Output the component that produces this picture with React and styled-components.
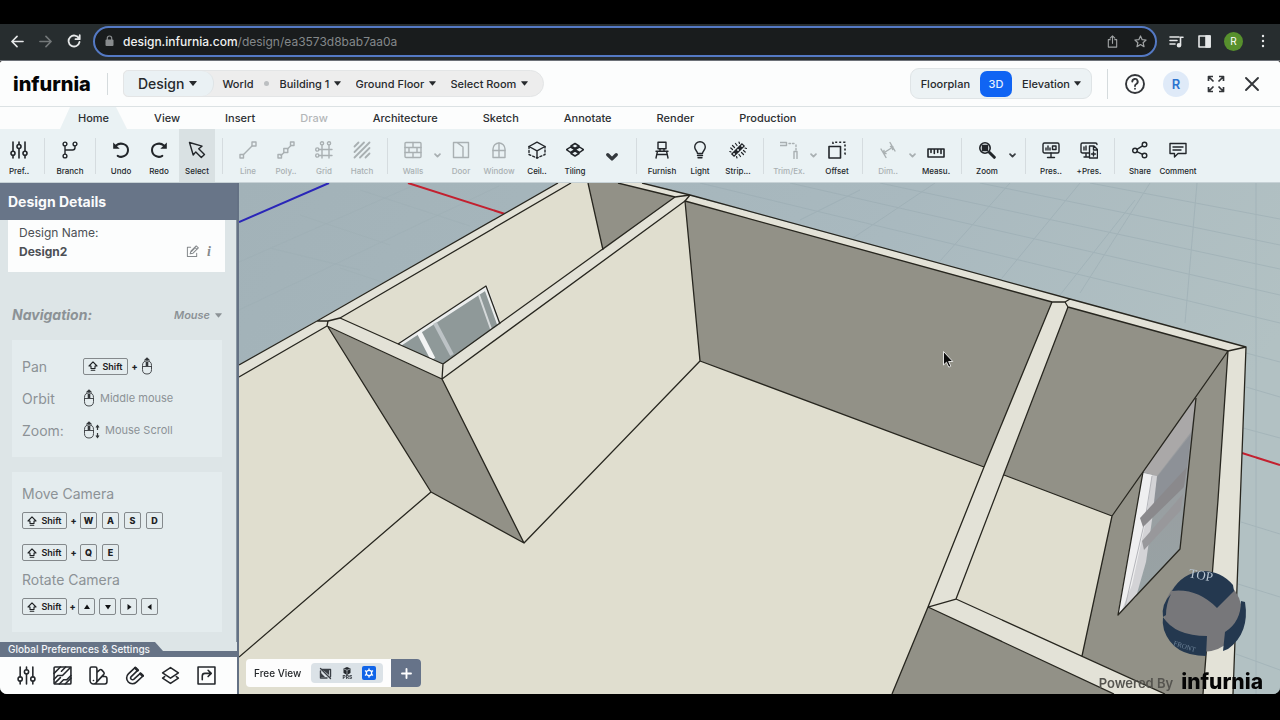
import React from 'react';
import styled, { createGlobalStyle, css } from 'styled-components';

const GlobalStyle = createGlobalStyle`
	* {
		box-sizing: border-box;
	}
	body {
		margin: 0;
		background: #000;
		font-family: Inter, 'Liberation Sans', sans-serif;
		color: #26292c;
	}
	button, select, input {
		font: inherit;
		color: inherit;
		background: none;
		border: 0;
		margin: 0;
		padding: 0;
	}
	button, select {
		cursor: pointer;
	}
	svg {
		display: block;
		flex: none;
	}
`;

const Screen = styled.div`
	display: flex;
	flex-direction: column;
	height: 100vh;
	padding: 24px 0 26px;
	background: #000;
`;

/* ---------- browser bar ---------- */

const BrowserBar = styled.div`
	display: flex;
	align-items: center;
	flex: none;
	height: 37px;
	padding: 0 9px 2px 9px;
	gap: 11px;
	background: #272d2f;
	border-bottom: 1px solid #6d7178;
	color: #e6e8e9;
`;

const BrowserButton = styled.button`
	display: flex;
	align-items: center;
	justify-content: center;
	width: 17px;
	height: 20px;
	opacity: ${(p) => (p.$dim ? 0.4 : 1)};
`;

const AddressBar = styled.form`
	display: flex;
	align-items: center;
	flex: 1;
	height: 31px;
	padding: 0 6px 0 10px;
	gap: 9px;
	border: 2px solid #5479c4;
	border-radius: 16px;
	background: #191c1d;
	color: #a0a3a4;
`;

const Url = styled.div`
	flex: 1;
	font-size: 12px;
	color: #84888a;

	b {
		font-weight: 500;
		color: #f0f1f1;
	}
`;

const BrowserTools = styled.div`
	display: flex;
	align-items: center;
	gap: 11px;
`;

const Profile = styled.button`
	width: 19px;
	height: 19px;
	border-radius: 50%;
	background: #57902d;
	color: #fff;
	font-size: 10px;
	line-height: 19px;
`;

/* ---------- app header ---------- */

const Header = styled.header`
	display: flex;
	align-items: center;
	flex: none;
	height: 46px;
	padding: 0 19px 0 13px;
	background: #fcfdfd;
	border-bottom: 1px solid #dce2e4;
	border-radius: 2px 2px 0 0;
`;

const Logo = styled.a`
	color: #050505;
	font-size: ${(p) => p.$size}px;
	line-height: 24px;
	font-weight: 800;
	text-decoration: none;
`;

const Divider = styled.span`
	flex: none;
	width: 1px;
	height: ${(p) => p.$h}px;
	margin: ${(p) => p.$m};
	background: #d5dbdd;
`;

const Crumbs = styled.nav`
	display: flex;
	align-items: center;
	height: 27px;
	padding-right: 15px;
	border: 1px solid #e3e5e6;
	border-radius: 5px 14px 14px 5px;
	background: #ededed;
	font-size: 11px;
	font-weight: 500;
`;

const DesignButton = styled.button`
	display: flex;
	align-items: center;
	gap: 5px;
	height: 25px;
	padding: 0 16px 0 14px;
	margin-right: 8px;
	border-right: 1px solid #dfe4e6;
	border-radius: 5px 12px 12px 5px;
	background: #eaf1f4;
	font-size: 14px;
	font-weight: 500;
`;

const Dot = styled.span`
	width: 5px;
	height: 5px;
	margin: 0 11px 0 10px;
	border-radius: 50%;
	background: #bcbfc1;
`;

const Picker = styled.label`
	display: flex;
	align-items: center;
	gap: 4px;

	& + & {
		margin-left: 15px;
	}

	select {
		appearance: none;
		outline: none;
	}
`;

const Spacer = styled.div`
	flex: 1;
`;

const ViewSwitch = styled.div`
	display: flex;
	align-items: center;
	gap: 10px;
	height: 31px;
	padding: 0 10px;
	border: 1px solid #dfe4e6;
	border-radius: 9px;
	background: #ecf2f4;
	font-size: 11px;
	font-weight: 500;
`;

const ViewMode = styled.button`
	height: 26px;
	${(p) =>
		p.$active &&
		css`
			width: 32px;
			border-radius: 7px;
			background: #1064f3;
			color: #e8f0ff;
		`}
`;

const HeaderIcons = styled.div`
	display: flex;
	align-items: center;
	gap: 18px;
`;

const HeaderButton = styled.button`
	display: flex;
	color: #33363a;
`;

const Avatar = styled.button`
	width: 26px;
	height: 26px;
	border-radius: 50%;
	background: #dfeaf8;
	color: #2d74cf;
	font-size: 13px;
	font-weight: 600;
`;

/* ---------- ribbon ---------- */

const Tabs = styled.nav`
	display: flex;
	flex: none;
	height: 22px;
	padding-left: 60px;
	background: #fcfdfd;
`;

const Tab = styled.button`
	padding: 0 18px;
	margin-right: 9px;
	font-size: 11px;
	font-weight: 500;
	color: ${(p) => (p.disabled ? '#b4b7b9' : '#2c2f32')};
	${(p) =>
		p.$active &&
		css`
			background: #eaf2f4;
			clip-path: polygon(10px 0, 56px 0, 100% 100%, 0 100%);
		`}
`;

const Ribbon = styled.div`
	display: flex;
	flex: none;
	height: 54px;
	padding-left: 1px;
	background: #eaf2f4;
	border-bottom: 1px solid #c7d2d6;
`;

const ToolGroup = styled.div`
	display: flex;
	gap: 2px;

	& + &::before {
		content: '';
		align-self: center;
		width: 1px;
		height: 36px;
		margin: 0 5px 0 7px;
		background: #d5dcdf;
	}
`;

const Tool = styled.button`
	display: flex;
	flex-direction: column;
	align-items: center;
	justify-content: center;
	gap: 7px;
	width: 36px;
	padding-top: 5px;
	white-space: nowrap;
	font-size: 8px;
	line-height: 10px;
	font-weight: 500;
	color: ${(p) => (p.disabled ? '#a9b0b2' : '#22262a')};
	background: ${(p) => (p.$active ? '#d9e1e3' : 'none')};

	span {
		display: flex;
		justify-content: center;
		width: 36px;
	}
`;

const Caret = styled.button`
	display: flex;
	align-items: center;
	justify-content: center;
	width: 8px;
	color: ${(p) => (p.disabled ? '#a9b0b2' : '#3a3f43')};

	&:last-child {
		width: 11px;
	}
`;

const MoreButton = styled.button`
	display: flex;
	align-items: center;
	justify-content: center;
	width: 34px;
	padding-top: 2px;
	color: #34393d;
`;

/* ---------- side panel ---------- */

const Main = styled.main`
	display: flex;
	flex: 1;
	min-height: 0;
	overflow: hidden;
	border-radius: 0 0 7px 7px;
`;

const Panel = styled.aside`
	display: flex;
	flex-direction: column;
	flex: none;
	width: 239px;
	background: #dde5e7;
	border-right: 2px solid #647184;
`;

const PanelTitle = styled.h1`
	margin: 0;
	padding: 0 8px;
	font-size: 14px;
	line-height: 37px;
	font-weight: 700;
	color: #fafbfc;
	background: #687588;
`;

const PanelBody = styled.div`
	flex: 1;
	min-height: 0;
	overflow: hidden;
	padding: 0 11px 0 8px;
	border-right: 1px solid #8a97a3;
	color: #8c9296;
`;

const NameCard = styled.section`
	display: grid;
	grid-template-columns: 1fr auto;
	padding: 3px 14px 11px 11px;
	background: #fcfdfd;
	font-size: 12px;
	line-height: 19px;
	color: #4c5055;
`;

const NameActions = styled.div`
	display: flex;
	align-items: center;
	gap: 8px;
	color: #85898c;
`;

const InfoButton = styled.button`
	font-family: 'Liberation Serif', serif;
	font-size: 14px;
	font-weight: 700;
	font-style: italic;
	line-height: 16px;
`;

const NavHead = styled.div`
	display: flex;
	align-items: center;
	justify-content: space-between;
	padding: 34px 3px 16px 4px;
	line-height: 18px;
	font-size: 11px;
	font-weight: 600;
	font-style: italic;

	h2 {
		margin: 0;
		font-size: 14px;
		font-weight: 700;
	}
`;

const HintCard = styled.section`
	margin: 0 3px 15px 4px;
	padding: ${(p) => p.$pad};
	background: #e4ecee;
`;

const HintRow = styled.div`
	display: grid;
	grid-template-columns: 61px 1fr;
	align-items: center;
	height: 32px;
	font-size: 14px;
`;

const HintTitle = styled.h3`
	margin: 0;
	font-size: 14px;
	font-weight: 400;
	line-height: 27px;
`;

const Keys = styled.div`
	display: flex;
	align-items: center;
	gap: ${(p) => p.$gap || 5}px;
	min-height: 27px;
	margin-bottom: ${(p) => p.$mb || 0}px;
	font-size: 11px;
`;

const Key = styled.kbd`
	display: flex;
	align-items: center;
	justify-content: center;
	gap: 4px;
	width: ${(p) => (p.$wide ? 45 : 17)}px;
	height: 17px;
	border: 1px solid #84898c;
	border-radius: 2px;
	font-family: inherit;
	font-size: 9px;
	font-weight: ${(p) => (p.$wide ? 600 : 800)};
	color: #1d2023;
`;

const Plus = styled.span`
	width: 7px;
	margin: 0 -2px;
	text-align: center;
	font-size: 9px;
	font-weight: 800;
	color: #1d2023;
`;

const PrefStrip = styled.div`
	flex: none;
	height: 15px;
	background: linear-gradient(transparent 9px, #667386 9px);

	h2 {
		display: inline-block;
		margin: 0;
		padding: 0 13px 0 8px;
		font-size: 10px;
		font-weight: 500;
		line-height: 15px;
		color: #f4f6f8;
		background: #667386;
		clip-path: polygon(0 0, calc(100% - 8px) 0, 100% 9px, 100% 100%, 0 100%);
		vertical-align: top;
	}
`;

const PrefBar = styled.div`
	display: flex;
	align-items: center;
	flex: none;
	gap: 17px;
	height: 37px;
	padding-left: 17px;
	background: #fcfdfd;
`;

const PrefButton = styled.button`
	display: flex;
	color: #25282c;
`;

/* ---------- 3D view ---------- */

const Viewport = styled.section`
	position: relative;
	flex: 1;
	min-width: 0;
	background: #a9b9be;

	& > svg {
		width: 100%;
		height: 100%;
	}
`;

const ViewBar = styled.div`
	position: absolute;
	left: 7px;
	bottom: 7px;
	display: flex;
	align-items: center;
	height: 28px;
	padding-left: 8px;
	border-radius: 4px;
	overflow: hidden;
	background: #fdfdfd;
	font-size: 10px;
	font-weight: 500;
`;

const ViewIcons = styled.div`
	display: flex;
	align-items: center;
	gap: 8px;
	height: 20px;
	margin: 0 8px 0 10px;
	padding: 0 7px;
	border-radius: 4px;
	background: #dbe2e7;
`;

const ViewIcon = styled.button`
	display: flex;
	flex-direction: column;
	align-items: center;
	justify-content: center;
	width: 14px;
	height: 14px;
	border-radius: 2px;
	font-size: 5px;
	line-height: 5px;
	font-weight: 800;
	color: ${(p) => (p.$active ? '#fff' : '#3a3f46')};
	background: ${(p) => (p.$active ? '#1064e8' : 'none')};
`;

const AddView = styled.button`
	display: flex;
	align-items: center;
	justify-content: center;
	width: 30px;
	height: 28px;
	background: #667389;
	color: #fff;
`;

const Powered = styled.div`
	position: absolute;
	right: 17px;
	bottom: 0;
	display: flex;
	align-items: flex-end;
	gap: 8px;
	font-size: 13px;
	font-weight: 600;
	line-height: 21px;
	color: #55544f;
`;

/* ---------- icons ---------- */

const Svg = ({ size = 18, box = 18, w = 1.4, children, ...rest }) => (
	<svg
		width={size}
		height={size}
		viewBox={`0 0 ${box} ${box}`}
		fill="none"
		stroke="currentColor"
		strokeWidth={w}
		strokeLinecap="round"
		strokeLinejoin="round"
		aria-hidden="true"
		{...rest}
	>
		{children}
	</svg>
);

const Triangle = ({ size = 7 }) => (
	<svg width={size} height="5" viewBox="0 0 8 5" aria-hidden="true">
		<path d="M0.6 0h6.8q.6 0 .3.6L4.5 4.6q-.5.6-1 0L.3.6Q0 0 .6 0z" fill="currentColor" />
	</svg>
);

const Chevron = ({ size = 7, w = 2 }) => (
	<Svg size={size} box={8} w={w}>
		<path d="M1.2 2.5 4 5.3l2.8-2.8" />
	</Svg>
);

const Sliders = (
	<>
		<path d="M3 1v9M3 14.5V17M9 1v2.500M9 7.500V17M15 1v9M15 14.500V17" />
		<circle cx="3" cy="12.300" r="2" />
		<circle cx="9" cy="5.500" r="2" />
		<circle cx="15" cy="12.300" r="2" />
	</>
);

const icons = {
	pref: Sliders,
	branch: (
		<>
			<circle cx="4" cy="3" r="1.900" />
			<circle cx="14" cy="3" r="1.900" />
			<circle cx="4" cy="15" r="1.900" />
			<path d="M4 5v8M14 5v1.500q0 2.500-2.500 2.500H4" />
		</>
	),
	undo: (
		<>
			<path d="M4 4.500c4.500-3.800 12-1.300 12 4.500 0 5.500-6 8.500-10.300 5.800" strokeWidth="2" />
			<path d="M1.200 1.500v6.200h6.500z" fill="currentColor" stroke="none" />
		</>
	),
	redo: (
		<>
			<path d="M14 4.500c-4.500-3.800-12-1.300-12 4.500 0 5.500 6 8.500 10.300 5.800" strokeWidth="2" />
			<path d="M16.800 1.500v6.200h-6.500z" fill="currentColor" stroke="none" />
		</>
	),
	select: <path d="M1.500 1.500 14 5.200l-3.300 2.600L16.500 13.500 13.300 16.500 7.800 10.900 5.200 14z" />,
	line: (
		<>
			<path d="M4.300 13.700 13 5" />
			<rect x="1" y="13.500" width="3.500" height="3.500" />
			<rect x="13" y="1" width="4" height="4" />
		</>
	),
	poly: (
		<>
			<path d="M4 14.500l3-3M10.500 8 14 4.500" />
			<rect x="1" y="13.500" width="3.500" height="3.500" />
			<rect x="6.800" y="7.500" width="4" height="4" />
			<rect x="13.500" y="1" width="3.500" height="3.500" />
		</>
	),
	grid: (
		<>
			<path d="M7 4v13M14 4v13M4 8.500h13M4 14.500h13" />
			<circle cx="7" cy="2.300" r="1.600" />
			<circle cx="14" cy="2.300" r="1.600" />
			<circle cx="2.300" cy="8.500" r="1.600" />
			<circle cx="2.300" cy="14.500" r="1.600" />
		</>
	),
	hatch: <path d="M1.500 5.500l4-4M1.500 11 11 1.500M1.500 16.500l15-15M7 16.500l9.500-9.500M12.500 16.500l4-4" strokeWidth="1.800" />,
	walls: (
		<>
			<rect x="1" y="1.500" width="16" height="15" rx="1" />
			<path d="M1 6.500h16M1 11.500h16M9 1.500v5M5 6.500v5M13 6.500v5M9 11.500v5" />
		</>
	),
	door: (
		<path d="M5 1.500H1.500v15h15v-15H5l6 4.500v10.500" />
	),
	window: (
		<>
			<path d="M3 16.500V8a6 6 0 0 1 12 0v8.500z" />
			<path d="M9 2v14M3 9.500h12" />
		</>
	),
	ceiling: (
		<>
			<path d="M1 5.500 9 1.200l8 4.300-8 4.300zM9 9.800V17" />
			<path d="M1 5.500v8L9 17l8-3.500v-8" strokeDasharray="2 2" />
		</>
	),
	tiling: (
		<path
			d="M9 2.500 13 5 9 7.500 5 5zM4.500 6 9 8.700 4.500 11.500.5 8.700zM13.500 6l4 2.700-4 2.800L9 8.700zM9 9.800l4 2.700-4 2.500-4-2.500z"
			strokeWidth="1.500"
		/>
	),
	furnish: <path d="M5 1.200h8v6.500H5zM7 7.700v2.500M11 7.700v2.500M3 10.200h12M4.500 10.200 3 17M13.500 10.200 15 17M4 13.500h10" />,
	light: <path d="M6.500 12.500c0-2.500-2.800-3.200-2.800-6.500a5.300 5.300 0 0 1 10.600 0c0 3.300-2.800 4-2.800 6.500zM6.500 14.500h5M7 16.800h4" />,
	strip: (
		<>
			<path d="M3.500 14.500 14.500 3.500" strokeWidth="4.500" strokeLinecap="butt" />
			<path d="M5 13h.1M9 9h.1M13 5h.1" stroke="#eaf2f4" strokeWidth="1.800" />
			<path
				d="M2 11 .8 10.500M3.500 8.500 1.800 7M5.500 6.500 3.500 4.500M8 4.500 6.500 2.500M10.500 2.500 10 1M7.500 15.500l.5 1.500M10 13.500l1.500 2M12.500 11.500l2 2M14.500 9.500l1.700 1.500M16 7l1.500.5"
				strokeWidth="1.200"
			/>
		</>
	),
	trim: (
		<>
			<path d="M0 1.500h6.500M0 4.500h6.500V1.500M14 10.500v7M17 17.500v-7h-3" />
			<path d="M9 2.500h6M16 4v5" strokeDasharray="1.500 2" />
		</>
	),
	offset: (
		<>
			<path d="M1 5.500h11.500V17H1z" strokeWidth="1.600" />
			<path d="M5 3V1.200h12v12h-2" strokeDasharray="2 2" strokeWidth="1.600" strokeLinecap="butt" />
		</>
	),
	dim: <path d="M2 8l5 8.500M11 1.500l5 8.500M4.500 12 14 6M5 9.500 4.500 12l2.500.5M11.500 5.500 14 6l-.5 2.500" />,
	measure: <path d="M1 8h16v8H1zM4 8v3.500M7.300 8v4.500M10.700 8v3.500M14 8v4.500" strokeWidth="1.600" />,
	zoom: (
		<>
			<circle cx="7" cy="7" r="5.200" strokeWidth="1.600" />
			<rect x="4.500" y="4.500" width="5" height="5" fill="currentColor" />
			<path d="M11.500 11.500l4.800 4.800" strokeWidth="3" />
		</>
	),
	present: (
		<>
			<rect x="1" y="2" width="16" height="10" rx="1.500" />
			<path d="M9 12v4M5.500 16.500h7M4 9V7M6 9V5M8 9V7" />
			<rect x="10.500" y="5" width="3.500" height="3.500" />
		</>
	),
	addPresent: (
		<>
			<path d="M9 12H2.500Q1 12 1 10.500v-7Q1 2 2.500 2h13Q17 2 17 3.500M6 12v4M4 16h5M4 9V6M6 9V5" />
			<path d="M9.500 5H14l3.500 3.500V17h-8zM13.500 5v4h4M13.500 11v4M11.500 13h4" />
		</>
	),
	share: (
		<>
			<circle cx="13.500" cy="3.500" r="2.300" />
			<circle cx="4" cy="9.500" r="2.300" />
			<circle cx="13.500" cy="14.500" r="2.300" />
			<path d="M6 8.300l5.500-3.500M6 10.600l5.500 2.800" />
		</>
	),
	comment: <path d="M1 2.500h16v10H9l-3.500 3.500v-3.500H1zM4 6h10M4 9h8" />,
};

const groups = [
	[{ label: 'Pref..', icon: 'pref' }],
	[{ label: 'Branch', icon: 'branch' }],
	[
		{ label: 'Undo', icon: 'undo' },
		{ label: 'Redo', icon: 'redo' },
		{ label: 'Select', icon: 'select', active: true },
	],
	[
		{ label: 'Line', icon: 'line', off: true },
		{ label: 'Poly..', icon: 'poly', off: true },
		{ label: 'Grid', icon: 'grid', off: true },
		{ label: 'Hatch', icon: 'hatch', off: true },
	],
	[
		{ label: 'Walls', icon: 'walls', off: true, caret: true },
		{ label: 'Door', icon: 'door', off: true },
		{ label: 'Window', icon: 'window', off: true },
		{ label: 'Ceil..', icon: 'ceiling' },
		{ label: 'Tiling', icon: 'tiling', more: true },
	],
	[
		{ label: 'Furnish', icon: 'furnish' },
		{ label: 'Light', icon: 'light' },
		{ label: 'Strip...', icon: 'strip' },
	],
	[
		{ label: 'Trim/Ex.', icon: 'trim', off: true, caret: true },
		{ label: 'Offset', icon: 'offset' },
	],
	[
		{ label: 'Dim..', icon: 'dim', off: true, caret: true },
		{ label: 'Measu.', icon: 'measure' },
	],
	[{ label: 'Zoom', icon: 'zoom', caret: true }],
	[
		{ label: 'Pres..', icon: 'present' },
		{ label: '+Pres.', icon: 'addPresent' },
	],
	[
		{ label: 'Share', icon: 'share' },
		{ label: 'Comment', icon: 'comment' },
	],
];

const tabs = ['Home', 'View', 'Insert', 'Draw', 'Architecture', 'Sketch', 'Annotate', 'Render', 'Production'];

const prefs = [
	{ label: 'Preferences', art: Sliders },
	{
		label: 'Materials',
		art: (
			<>
				<rect x="1" y="1" width="16" height="16" rx="1" />
				<path d="M1 7l6-6M1 12.500 4.500 9H9l8-8M1.500 16.500 7 11M6 17l4-4h3l4-4M11.500 17 17 11.500M8 5l4-4" />
			</>
		),
	},
	{
		label: 'Swatches',
		art: (
			<path d="M1 2.500Q1 1 2.500 1H6q1.500 0 1.500 1.500v11.300a3.200 3.200 0 0 1-6.500 0zM7.500 6l2.700-2.300q1-.8 2 .2l1.800 2q.8 1 0 2l-7 7.600M12.500 10H15q2 0 2 2v3q0 2-2 2H5M4.200 13.800h.1" />
		),
	},
	{
		label: 'Snapping',
		art: (
			<>
				<path d="M9.500 1.500 3.200 7.500a5.400 5.400 0 0 0 7.600 7.800L17 9.500 14.500 7l-6 5.500a1.800 1.800 0 0 1-2.600-2.500L12 4.200z" />
				<path d="M9.800 1.800 12 4M14.700 7.200 16.700 9.200" strokeWidth="2.600" />
			</>
		),
	},
	{
		label: 'Layers',
		art: <path d="M9 1.500 16.500 6.500 9 11.500 1.500 6.500zM3.500 10 1.500 11.500l7.500 5 7.500-5-2-1.500" />,
	},
	{
		label: 'Export',
		art: (
			<>
				<path d="M1 1h16v16H1z" />
				<path d="M5 13V9.500Q5 7 7.500 7H13M10.500 4 13.500 7l-3 3" />
			</>
		),
	},
];

const MouseIcon = ({ scroll }) => (
	<svg width={scroll ? 17 : 12} height="18" viewBox={scroll ? '0 0 17 18' : '0 0 12 18'} fill="none" stroke="#34383b" aria-hidden="true">
		<path d="M1.500 8.500Q1.500 4 6 4t4.500 4.500v4q0 4.500-4.500 4.500t-4.500-4.500zM1.500 9.500h9" strokeWidth="0.900" />
		<path d="M6 5v4" strokeWidth="2.600" />
		<path d="M3.500 3.500 6 1l2.500 2.500M6 1v3" strokeWidth="1.100" />
		{scroll && <path d="M14.500 5v4M13 6.500l1.500-2 1.500 2M14.500 12v4M13 14.500l1.500 2 1.500-2" strokeWidth="1.200" />}
	</svg>
);

const ShiftKey = () => (
	<Key $wide>
		<Svg size={10} box={10} w={1.1}>
			<path d="M5 .8 9 5H7v2.500H3V5H1zM3.200 9.300h3.600" />
		</Svg>
		Shift
	</Key>
);

const arrows = ['M4 1.500 7 6H1z', 'M4 6.500 7 2H1z', 'M6.500 4 2.500 1v6z', 'M1.500 4l4-3v6z'];

/* model drawn in view coordinates, the slice keeps it filling the viewport */
const Scene = () => (
	<svg viewBox="239 183 1041 511" preserveAspectRatio="xMidYMid slice" role="img" aria-label="3D model of the ground floor">
		<defs>
			<linearGradient id="ground" x1="0" y1="0" x2="1" y2="0.300">
				<stop offset="0" stopColor="#a2b2b8" />
				<stop offset="0.600" stopColor="#a9b9bf" />
				<stop offset="1" stopColor="#b2c1c3" />
			</linearGradient>
			<linearGradient id="pane" x1="0" y1="0" x2="0" y2="1">
				<stop offset="0" stopColor="#9a9a9d" />
				<stop offset="1" stopColor="#98a4a6" />
			</linearGradient>
		</defs>
		<rect x="239" y="183" width="1041" height="511" fill="url(#ground)" />
		<g stroke="#97a9b0" strokeWidth="1" opacity="0.500" fill="none">
			<path d="M700 183l580 140M790 183l490 112M880 183l400 86M980 183l300 62M1090 183l190 36M1246 353l34 9M1246 387l34 10M1243 428l37 10M1241 522l39 12M1238 584l42 13M1236 654l44 16" />
			<path d="M860 190l-60 30M935 183l-82 55M1010 183l-70 78M1080 183l-78 95M1150 183l-70 110M1197 183l-12 140M1256 183v511M1135 200l-75 95" />
			<path d="M239 262l180-79M239 310l260-124M270 248l90 22M340 268l60 20M300 215l90 30M360 190l110 36" opacity="0.500" />
		</g>
		<path d="M239 222 329 183" stroke="#2a26b8" strokeWidth="2" />
		<path d="M408 183 505 214M1242 453 1280 465" stroke="#c3202f" strokeWidth="2" />

		<path d="M239 365 558 183H642L1246 347 1233 694H239z" fill="#e0decf" />
		<g fill="#e3e2d7">
			<path d="M239 365 558 183H571L340 318 327 326 239 377z" />
			<path d="M642 183 1246 347 1228 351 675 197 618 183z" />
			<path d="M327 326 340 318 443 364 675 197 685 201 442 379z" />
			<path d="M1052 302 1068 307 956 599 928 607z" />
			<path d="M928 607 956 599 1165 694H1114z" />
			<path d="M1228 351 1246 347 1233 694H1203z" />
		</g>

		<g fill="#929187">
			<path d="M588 183H618L675 197 603 250z" />
			<path d="M685 201 1052 302 984 467 700 361z" />
			<path d="M1068 307 1228 351 1112 516 1004 475z" />
			<path d="M1228 351 1112 516 1082 656 1165 694H1203L1218 500z" />
			<path d="M928 607 892 694H1114z" />
			<path d="M328 327 442 379 524 543 431 492z" />
		</g>

		<path d="M398 344 486 286 500 324 443 364z" fill="#8f9999" />
		<path d="M400 344 486 288 499 324" stroke="#eceeee" strokeWidth="4" fill="none" />
		<path d="M479 295 491 329" stroke="#d5d9da" strokeWidth="2" />
		<path d="M419 332 433 359" stroke="#f3f4f4" strokeWidth="5" />
		<path d="M435 323 452 355" stroke="#bdc3c6" strokeWidth="4" />

		<path d="M1196 398 1180 549 1118 615 1143 472z" fill="url(#pane)" />
		<path d="M1196 398 1191 432 1157 476 1143 472z" fill="#aaa8a8" />
		<path d="M1191 434 1157 477 1152 508 1187 468z" fill="#8d9197" />
		<path d="M1143 473 1157 476 1152 520 1146 562 1136 597 1118 614z" fill="#d3d3d6" />
		<path d="M1143 473 1152 475 1146 520 1132 585 1121 612 1118 614z" fill="#efeff0" />
		<path d="M1152 476 1145 520 1125 607" stroke="#b4b5ba" strokeWidth="1" fill="none" />
		<path d="M1187 467 1140 518 1143 527 1184 487z" fill="#8a898c" />
		<path d="M1183 494 1142 541 1144 550 1181 510z" fill="#98989b" />

		<g fill="none" stroke="#27261f" strokeWidth="1.300" strokeLinejoin="round">
			<path d="M239 365 317 321 558 183M571 183 340 318 328 321M239 377 327 326M317 321 328 321 327 326" />
			<path d="M618 183 675 197 690 195M642 183 690 195 1070 299 1246 347 1233 694M690 195 685 201 1052 302 1065 302 1070 299M1065 302 1068 307 1228 351 1246 347M1228 351 1218 500 1203 694" />
			<path d="M588 183 603 250M340 318 443 364 675 197M327 326 442 379 685 201 700 361 524 543 431 492 328 327M443 364 442 379 524 543M431 492 239 657" />
			<path d="M700 361 984 467M1052 302 984 467 928 607 892 694M1068 307 956 599 928 607 1114 694M956 599 1165 694M1004 475 1112 516 1228 351M1112 516 1082 656" />
			<path d="M398 344 486 286 500 324M1196 398 1180 549 1118 615 1143 472" />
		</g>

		<circle cx="1203" cy="613" r="39" fill="#77777a" />
		<g fill="#24384f">
			<path d="M1172 591Q1182 573 1203 571q18 0 30 14l1 6-17 17q-20-20-45-17z" />
			<path d="M1171 594q-10 10-8 23l3-2q0-11 5-21z" />
			<path d="M1163 617q12 19 44 19l-1 20q-33 0-42-26-2-7-1-13z" />
			<path d="M1241 601l4 1q5 31-17 47l-5 2 2-19q16-10 16-31z" />
		</g>
		<text x="1188" y="580" fontSize="13" fontFamily="Liberation Serif, serif" fill="#b9c6d2" transform="rotate(10 1204 580)">
			TOP
		</text>
		<text x="1173" y="645" fontSize="7" fontFamily="Liberation Serif, serif" fill="#6f859a" transform="rotate(18 1173 645)">
			FRONT
		</text>

		<path d="M943.500 351.500v13.500l3-2.800 2.300 5 2-1-2.200-4.700h4.200z" fill="#0c0c0c" stroke="#f2f2f0" strokeWidth="0.900" />
	</svg>
);

const RibbonGroup = ({ items }) => (
	<ToolGroup>
		{items.map((t) => (
			<React.Fragment key={t.label}>
				<Tool disabled={t.off} $active={t.active}>
					<Svg w={t.icon === 'pref' ? 1.6 : 1.4}>{icons[t.icon]}</Svg>
					<span>{t.label}</span>
				</Tool>
				{t.caret && (
					<Caret disabled={t.off} aria-label={`${t.label} options`}>
						<Chevron />
					</Caret>
				)}
				{t.more && (
					<MoreButton aria-label="More tools">
						<Chevron size={12} w={2.2} />
					</MoreButton>
				)}
			</React.Fragment>
		))}
	</ToolGroup>
);

const SidePanel = () => (
	<Panel>
		<PanelTitle>Design Details</PanelTitle>
		<PanelBody>
			<NameCard>
				<span>Design Name:</span>
				<span />
				<b>Design2</b>
				<NameActions>
					<HeaderButton aria-label="Edit name">
						<Svg size={13} box={14} w={1.1} color="#85898c">
							<path d="M5 2.500H1.500v10h10V9M4.500 9.500l.8-3L11 1l2.300 2.200-5.700 5.600zM9.500 2.500l2.300 2.200M6 7l3-3" />
						</Svg>
					</HeaderButton>
					<InfoButton aria-label="Info">i</InfoButton>
				</NameActions>
			</NameCard>
			<NavHead>
				<h2>Navigation:</h2>
				<Picker>
					<select aria-label="Navigation device">
						<option>Mouse</option>
					</select>
					<Triangle />
				</Picker>
			</NavHead>
			<HintCard $pad="10px 10px 11px">
				<HintRow>
					Pan
					<Keys>
						<ShiftKey />
						<Plus>+</Plus>
						<MouseIcon />
					</Keys>
				</HintRow>
				<HintRow>
					Orbit
					<Keys>
						<MouseIcon /> Middle mouse
					</Keys>
				</HintRow>
				<HintRow>
					Zoom:
					<Keys>
						<MouseIcon scroll /> Mouse Scroll
					</Keys>
				</HintRow>
			</HintCard>
			<HintCard $pad="8px 10px 12px">
				<HintTitle>Move Camera</HintTitle>
				<Keys $mb={5}>
					<ShiftKey />
					<Plus>+</Plus>
					{['W', 'A', 'S', 'D'].map((k) => (
						<Key key={k}>{k}</Key>
					))}
				</Keys>
				<Keys>
					<ShiftKey />
					<Plus>+</Plus>
					<Key>Q</Key>
					<Key>E</Key>
				</Keys>
				<HintTitle>Rotate Camera</HintTitle>
				<Keys $gap={4}>
					<ShiftKey />
					<Plus>+</Plus>
					{arrows.map((d) => (
						<Key key={d}>
							<svg width="8" height="8" viewBox="0 0 8 8" aria-hidden="true">
								<path d={d} fill="#101214" />
							</svg>
						</Key>
					))}
				</Keys>
			</HintCard>
		</PanelBody>
		<PrefStrip>
			<h2>Global Preferences &amp; Settings</h2>
		</PrefStrip>
		<PrefBar>
			{prefs.map((p) => (
				<PrefButton key={p.label} aria-label={p.label}>
					<Svg size={19} w={1.5}>
						{p.art}
					</Svg>
				</PrefButton>
			))}
		</PrefBar>
	</Panel>
);

export default function App() {
	return (
		<>
			<GlobalStyle />
			<Screen>
				<BrowserBar>
					<BrowserButton aria-label="Back">
						<Svg size={13} box={14} w={1.7}>
							<path d="M13 7H1.500M6.500 1.500 1 7l5.500 5.500" />
						</Svg>
					</BrowserButton>
					<BrowserButton aria-label="Forward" $dim>
						<Svg size={13} box={14} w={1.7}>
							<path d="M1 7h11.500M7.500 1.500 13 7l-5.500 5.500" />
						</Svg>
					</BrowserButton>
					<BrowserButton aria-label="Reload">
						<Svg size={14} box={14} w={1.8}>
							<path d="M12 4.500A5.500 5.500 0 1 0 12.500 8M12.700 1.200v4H8.500" />
						</Svg>
					</BrowserButton>
					<AddressBar>
						<svg width="9" height="12" viewBox="0 0 9 12" aria-hidden="true">
							<path d="M2.300 5V3.200a2.200 2.200 0 0 1 4.400 0V5" fill="none" stroke="#888b8d" strokeWidth="1.200" />
							<rect x="0.500" y="4.500" width="8" height="6.500" rx="1" fill="#888b8d" />
						</svg>
						<Url>
							<b>design.infurnia.com</b>/design/ea3573d8bab7aa0a
						</Url>
						<BrowserTools>
							<BrowserButton type="button" aria-label="Share page">
								<Svg size={13} box={14} w={1.2}>
									<path d="M4.500 5H2.500v8h9V5h-2M7 9V1M4.500 3.300 7 1l2.500 2.300" />
								</Svg>
							</BrowserButton>
							<BrowserButton type="button" aria-label="Bookmark">
								<Svg size={13} box={14} w={1.3}>
									<path d="M7 1l1.800 4 4.200.4-3.200 2.900 1 4.200L7 10.300l-3.800 2.200 1-4.200L1 5.400 5.200 5z" />
								</Svg>
							</BrowserButton>
						</BrowserTools>
					</AddressBar>
					<BrowserTools>
						<BrowserButton aria-label="Media">
							<Svg size={15} box={15} w={1.6}>
								<path d="M1 3h9M1 6.500h7M1 10h5M11.500 11V3.200h2.500" />
								<circle cx="10" cy="11.200" r="1.500" fill="currentColor" />
							</Svg>
						</BrowserButton>
						<BrowserButton aria-label="Side panel">
							<Svg size={13} box={13} w={1.6}>
								<path d="M1 1h11v11H1z" />
								<path d="M8 1h4v11H8z" fill="currentColor" />
							</Svg>
						</BrowserButton>
						<Profile>R</Profile>
						<BrowserButton aria-label="Menu">
							<Svg size={14} box={14} w={2.4}>
								<path d="M7 2h.01M7 7h.01M7 12h.01" />
							</Svg>
						</BrowserButton>
					</BrowserTools>
				</BrowserBar>

				<Header>
					<Logo href="#" $size={20}>
						infurnia
					</Logo>
					<Divider $h={22} $m="0 15px 0 16px" />
					<Crumbs>
						<DesignButton>
							Design <Triangle size={8} />
						</DesignButton>
						World
						<Dot />
						<Picker>
							<select aria-label="Building">
								<option>Building 1</option>
							</select>
							<Triangle />
						</Picker>
						<Picker>
							<select aria-label="Floor">
								<option>Ground Floor</option>
							</select>
							<Triangle />
						</Picker>
						<Picker>
							<select aria-label="Room">
								<option>Select Room</option>
							</select>
							<Triangle />
						</Picker>
					</Crumbs>
					<Spacer />
					<ViewSwitch>
						<ViewMode>Floorplan</ViewMode>
						<ViewMode $active>3D</ViewMode>
						<Picker>
							<select aria-label="Elevation">
								<option>Elevation</option>
							</select>
							<Triangle />
						</Picker>
					</ViewSwitch>
					<Divider $h={30} $m="0 17px 0 15px" />
					<HeaderIcons>
						<HeaderButton aria-label="Help">
							<Svg size={20} box={20} w={1.9}>
								<circle cx="10" cy="10" r="9" />
								<path d="M7.300 7.600a2.700 2.700 0 1 1 4 2.400Q10 10.700 10 12M10 14.700h.01" />
							</Svg>
						</HeaderButton>
						<Avatar>R</Avatar>
						<HeaderButton aria-label="Full screen">
							<Svg size={18} w={1.7} strokeLinecap="butt">
								<path d="M1.500 6V1.500H6M1.500 1.500 6.500 6.500M12 1.500h4.500V6M16.500 1.500l-5 5M1.500 12v4.500H6M1.500 16.500l5-5M12 16.500h4.500V12M16.500 16.500l-5-5" />
							</Svg>
						</HeaderButton>
						<HeaderButton aria-label="Close">
							<Svg size={18} w={1.9}>
								<path d="M3 3l12 12M15 3 3 15" />
							</Svg>
						</HeaderButton>
					</HeaderIcons>
				</Header>

				<Tabs>
					{tabs.map((t) => (
						<Tab key={t} $active={t === 'Home'} disabled={t === 'Draw'}>
							{t}
						</Tab>
					))}
				</Tabs>
				<Ribbon>
					{groups.map((g) => (
						<RibbonGroup key={g[0].label} items={g} />
					))}
				</Ribbon>

				<Main>
					<SidePanel />
					<Viewport>
						<Scene />
						<ViewBar>
							Free View
							<ViewIcons>
								<ViewIcon aria-label="Hide camera">
									<Svg size={13} box={13} w={1.4}>
										<path d="M3 2.500h8.500v7M1.500 1.500l10 10M1.500 4v7h6.500" />
										<path d="M4 3h6v5zM2 6l4 4H2z" fill="currentColor" stroke="none" />
									</Svg>
								</ViewIcon>
								<ViewIcon>
									<svg width="8" height="8" viewBox="0 0 8 8" aria-hidden="true">
										<path d="M4 0l3.500 1.500V6L4 8 .5 6V1.500z" fill="#24282d" />
										<path d="M1 2l3 1.300L7 2M4 3.300V7" stroke="#dbe2e7" strokeWidth="0.600" fill="none" />
									</svg>
									PRS
								</ViewIcon>
								<ViewIcon $active aria-label="View settings">
									<Svg size={10} box={10} w={1.3}>
										<circle cx="5" cy="5" r="2.700" />
										<path d="M5 .8v1M5 8.200v1M1.400 2.900l.8.500M7.800 6.600l.8.500M1.400 7.100l.8-.5M7.800 3.400l.8-.5" />
									</Svg>
								</ViewIcon>
							</ViewIcons>
							<AddView aria-label="Add view">
								<Svg size={11} box={11} w={1.9}>
									<path d="M5.500 1v9M1 5.500h9" />
								</Svg>
							</AddView>
						</ViewBar>
						<Powered>
							Powered By
							<Logo href="#" $size={21}>
								infurnia
							</Logo>
						</Powered>
					</Viewport>
				</Main>
			</Screen>
		</>
	);
}
